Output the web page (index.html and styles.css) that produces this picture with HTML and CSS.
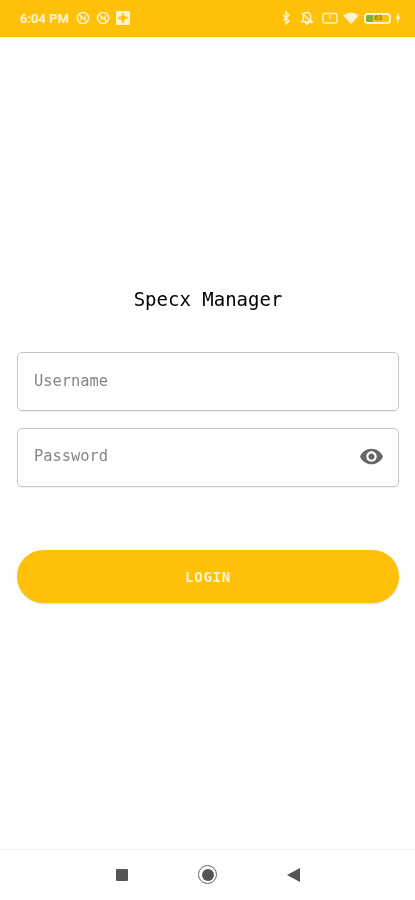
FILE: index.html
```html
<!DOCTYPE html>
<html lang="en">
<head>
<meta charset="utf-8">
<title>Specx Manager</title>
<link rel="stylesheet" href="styles.css">
</head>
<body>
<div class="screen">
  <header class="status">
    <div class="status-left">
      <span class="time">6:04 PM</span>
      <svg class="ic" viewBox="0 0 14 14"><circle cx="7" cy="7" r="5.6" fill="none" stroke="#fff3cf" stroke-width="1.5"/><path d="M3.5 3.5L10.500 10.500M5 9.500V5M9 9V4.500" fill="none" stroke="#fff3cf" stroke-width="1.200"/></svg>
      <svg class="ic" viewBox="0 0 14 14"><circle cx="7" cy="7" r="5.6" fill="none" stroke="#fff3cf" stroke-width="1.5"/><path d="M3.5 3.5L10.500 10.500M5 9.500V5M9 9V4.500" fill="none" stroke="#fff3cf" stroke-width="1.200"/></svg>
      <svg class="ic" viewBox="0 0 14 14"><rect x="0" y="0" width="14" height="14" rx="1.5" fill="#fff3cf"/><circle cx="7" cy="7" r="2.800" fill="#ffc107"/><path d="M7 1.500l1.500 2.500h-3zM7 12.500l-1.500-2.500h3zM1.500 7l2.500-1.500v3zM12.500 7l-2.500 1.500v-3z" fill="#ffc107"/></svg>
    </div>
    <div class="status-right">
      <svg class="ic-bt" viewBox="0 0 8 14"><path d="M1 4l6 6-3 3V1l3 3-6 6" fill="none" stroke="#fff3cf" stroke-width="1.400"/></svg>
      <svg class="ic ic-bell" viewBox="0 0 14 14"><path d="M7 1.500a3.600 3.600 0 0 1 3.600 3.600V9l1.600 1.600H1.800L3.400 9V5.100A3.600 3.600 0 0 1 7 1.500zM5.500 12h3L7 13.500zM2 2l10 10" fill="none" stroke="#fff3cf" stroke-width="1.400"/></svg>
      <svg class="ic-alarm" viewBox="0 0 16 12"><rect x="1" y="1.500" width="14" height="9.500" rx="2" fill="none" stroke="#fff3cf" stroke-width="1.400"/><path d="M8 3v4" stroke="#fff3cf" stroke-width="1.400"/></svg>
      <svg class="ic-wifi" viewBox="0 0 16 12"><path d="M0 3.500Q8-2.500 16 3.500L8 12z" fill="#fff3cf"/></svg>
      <span class="battery"><span class="battery-fill"></span><span class="battery-num">63</span></span>
      <svg class="ic-bolt" viewBox="0 0 6 12"><path d="M3.800 0L.5 7h2L2 12l3.500-7.500h-2z" fill="#fff3cf"/></svg>
    </div>
  </header>

  <main class="login">
    <h1 class="title">Specx Manager</h1>
    <div class="field field-user"><span class="placeholder">Username</span></div>
    <div class="field field-pass">
      <span class="placeholder placeholder-pass">Password</span>
      <svg class="eye" viewBox="0 0 24 24"><path d="M12 4.500C7 4.500 2.730 7.610 1 12c1.730 4.390 6 7.500 11 7.500s9.270-3.110 11-7.500c-1.730-4.390-6-7.500-11-7.500zM12 17c-2.760 0-5-2.240-5-5s2.240-5 5-5 5 2.240 5 5-2.240 5-5 5zm0-8c-1.660 0-3 1.340-3 3s1.340 3 3 3 3-1.340 3-3-1.340-3-3-3z" fill="#666"/></svg>
    </div>
    <button class="submit" type="button">LOGIN</button>
  </main>

  <nav class="navbar">
    <span class="nav-square"></span>
    <span class="nav-circle"><span class="nav-dot"></span></span>
    <span class="nav-back"></span>
  </nav>
</div>
</body>
</html>
```
FILE: styles.css
```css
* { box-sizing: border-box; }
html, body { margin: 0; padding: 0; background: #fff; }
body { font-family: "DejaVu Sans Mono", monospace; }
.screen { width: 415px; height: 900px; display: flex; flex-direction: column; overflow: hidden; filter: blur(0.4px); }

.status {
  height: 37px; flex: none; background: #ffc107;
  display: flex; align-items: center; justify-content: space-between;
  padding: 0 14px 1px 20px; color: #fff3cf;
}
.status-left, .status-right { display: flex; align-items: center; }
.status-left { gap: 6px; }
.status-right { gap: 5px; }
.time { font: 700 13px "Roboto", sans-serif; margin-right: 1px; }
.ic { width: 14px; height: 14px; display: block; }
.ic-bt { width: 8px; height: 14px; display: block; }
.ic-bell { margin-left: 5px; }
.ic-alarm { width: 16px; height: 12px; display: block; margin-left: 3px; }
.ic-wifi { width: 16px; height: 12px; display: block; }
.battery {
  width: 27px; height: 11px; border: 2px solid #fff3cf; border-radius: 4px;
  display: flex; align-items: center; overflow: hidden; margin-right: -1px;
}
.battery-fill { width: 7px; height: 100%; background: #7fae3a; }
.battery-num { font: 700 7px "Roboto", sans-serif; color: #6d8a28; margin-left: 1px; }
.ic-bolt { width: 6px; height: 12px; display: block; }

.login { flex: 1; display: flex; flex-direction: column; padding: 250px 16px 0 17px; }
.title {
  margin: 0 0 41px; height: 24px; font-size: 19px; line-height: 24px; font-weight: 400;
  text-align: center; color: #000;
}
.field {
  height: 59px; border: 1.500px solid #c4c4c4; border-radius: 5px;
  display: flex; align-items: center; justify-content: space-between;
  padding: 0 13px 2px 16px; box-shadow: 0 1px 1px rgba(0,0,0,.06);
}
.field-user { margin-bottom: 17px; }
.field-pass { margin-bottom: 63px; }
.placeholder { font-size: 15.400px; color: #858585; }
.placeholder-pass { margin-top: -2px; }
.eye { width: 25px; height: 25px; display: block; margin-right: 1px; }
.submit {
  height: 53px; width: 100%; border: 0; border-radius: 27px; background: #ffc107;
  color: #fff3d0; font: 700 14px "DejaVu Sans Mono", monospace; letter-spacing: 0.800px;
  box-shadow: 0 1px 2px rgba(0,0,0,.15); padding: 1px 0 0;
}

.navbar {
  height: 51px; flex: none; border-top: 1px solid #f2f2f2;
  display: flex; align-items: center; justify-content: center; padding-bottom: 1px;
}
.nav-square { width: 12px; height: 12px; background: #555; border-radius: 1px; margin-left: 1px; }
.nav-circle {
  width: 19px; height: 19px; border: 1.500px solid #666; border-radius: 50%;
  display: flex; align-items: center; justify-content: center; margin: 0 70px 0 70px;
}
.nav-dot { width: 12px; height: 12px; border-radius: 50%; background: #555; }
.nav-back {
  width: 0; height: 0; border-style: solid; border-width: 7px 13px 7px 0;
  border-color: transparent #555 transparent transparent;
}
```
